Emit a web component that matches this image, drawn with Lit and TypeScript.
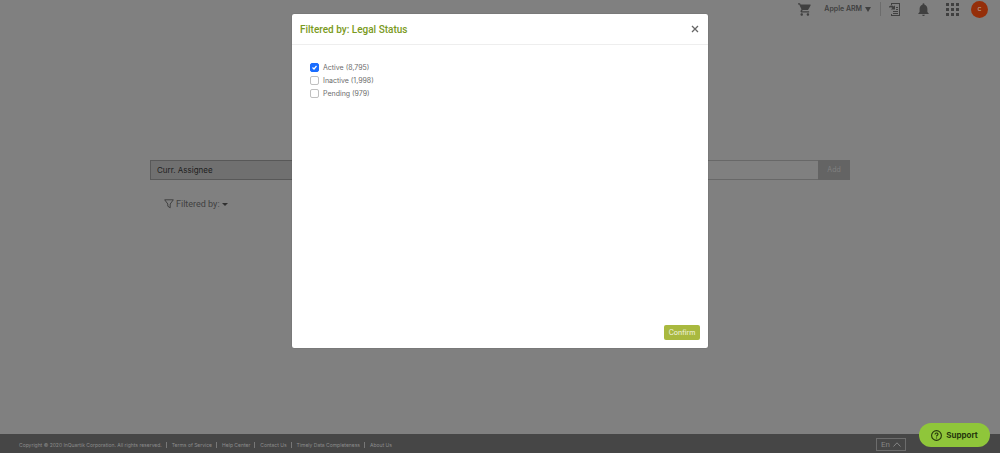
import { LitElement, html, css } from "lit";
import { customElement, state } from "lit/decorators.js";

interface StatusOption {
  id: string;
  label: string;
  checked: boolean;
}

@customElement("app-topbar")
export class AppTopbar extends LitElement {
  static styles = css`
    :host {
      display: block;
    }
    .bar {
      display: flex;
      align-items: center;
      justify-content: flex-end;
      height: 18px;
      padding: 0 12px 0 0;
    }
    button {
      display: flex;
      align-items: center;
      padding: 0;
      border: 0;
      background: none;
      color: #404040;
      font: 7px/10px Inter, sans-serif;
    }
    svg {
      display: block;
      fill: currentColor;
    }
    .cart {
      margin-right: 13px;
    }
    .account {
      gap: 3px;
      font-weight: 600;
      margin-right: 9px;
    }
    .divider {
      width: 1px;
      height: 14px;
      background: #6c6c6c;
      margin-right: 8px;
    }
    .export {
      margin-right: 17px;
    }
    .bell {
      margin-right: 17px;
    }
    .grid {
      margin-right: 12px;
    }
    .avatar {
      justify-content: center;
      width: 17px;
      height: 17px;
      border-radius: 50%;
      background: #952f0a;
      color: #b9a9a2;
      font-size: 7px;
    }
  `;

  render() {
    return html`
      <header class="bar">
        <button class="cart" aria-label="Cart">
          <svg width="13" height="13" viewBox="1 2 21 20">
            <path d="M7 18c-1.100 0-2 .9-2 2s.9 2 2 2 2-.9 2-2-.9-2-2-2zM1 2v2h2l3.600 7.600L5.250 14c-.16.300-.25.600-.25 1 0 1.100.9 2 2 2h12v-2H7.400l1.150-2h7.400c.75 0 1.400-.4 1.750-1L21.300 5.500C21.700 4.800 21.200 4 20.400 4H5.200l-.9-2H1zm16 16c-1.100 0-2 .9-2 2s.9 2 2 2 2-.9 2-2-.9-2-2-2z" />
          </svg>
        </button>
        <button class="account">
          Apple ARM
          <svg width="6" height="5" viewBox="0 0 6 5"><path d="M0 0h6L3 5z" /></svg>
        </button>
        <span class="divider"></span>
        <button class="export" aria-label="Export list">
          <svg width="12" height="13" viewBox="0 0 12 13">
            <path d="M2 0h9v13H2v-2h1v1h7V1H3v1H2z" />
            <path d="M0 3.500C1.500 2 3.500 2 4.800 3.500L6 2.300V6.500H1.800L3.400 4.900C2.500 4 1.200 4 .4 4.800zM7 4h2v1H7zM7 6h2v1H7zM4 8h5v1H4zM4 10h5v1H4z" />
          </svg>
        </button>
        <button class="bell" aria-label="Notifications">
          <svg width="11" height="13" viewBox="4 2 16 20">
            <path d="M12 22c1.100 0 2-.9 2-2h-4c0 1.100.9 2 2 2zm6-6v-5c0-3.070-1.630-5.640-4.500-6.320V4a1.500 1.500 0 0 0-3 0v.68C7.640 5.360 6 7.920 6 11v5l-2 2v1h16v-1l-2-2z" />
          </svg>
        </button>
        <button class="grid" aria-label="Apps">
          <svg width="13" height="13" viewBox="0 0 13 13">
            <path d="M0 0h3v3H0zM5 0h3v3H5zM10 0h3v3h-3zM0 5h3v3H0zM5 5h3v3H5zM10 5h3v3h-3zM0 10h3v3H0zM5 10h3v3H5zM10 10h3v3h-3z" />
          </svg>
        </button>
        <button class="avatar" aria-label="Profile">c</button>
      </header>
    `;
  }
}

@customElement("app-search")
export class AppSearch extends LitElement {
  static styles = css`
    :host {
      display: block;
      width: 70%;
      margin: 0 auto;
    }
    .row {
      display: flex;
      height: 20px;
    }
    select,
    input,
    .add {
      box-sizing: border-box;
      height: 20px;
      margin: 0;
      border-radius: 0;
      font: 8px/18px Inter, sans-serif;
    }
    select {
      appearance: none;
      width: 160px;
      padding: 0 6px;
      border: 1px solid #585858;
      background: #707070;
      color: #202020;
    }
    input {
      flex: 1;
      min-width: 0;
      border: 1px solid #686868;
      border-width: 1px 0;
      background: #808080;
    }
    .add {
      width: 32px;
      padding: 0;
      border: 0;
      background: #646464;
      color: #808080;
      font-size: 7px;
    }
    .filter {
      display: flex;
      align-items: center;
      gap: 2px;
      margin: 18px 0 0 14px;
      padding: 0;
      border: 0;
      background: none;
      color: #404040;
      font: 9px/12px Roboto, sans-serif;
    }
    .funnel {
      fill: none;
      stroke: currentColor;
    }
    .caret {
      fill: #303030;
    }
  `;

  render() {
    return html`
      <div class="row">
        <select aria-label="Search field">
          <option>Curr. Assignee</option>
        </select>
        <input type="text" aria-label="Search term" />
        <button class="add" disabled>Add</button>
      </div>
      <button class="filter">
        <svg class="funnel" width="10" height="10" viewBox="0 0 10 10">
          <path d="M.7.800h8.600L6.200 5v3.800L3.800 7.200V5z" stroke-linejoin="round" />
        </svg>
        Filtered by:
        <svg class="caret" width="6" height="3" viewBox="0 0 6 3"><path d="M0 0h6L3 3z" /></svg>
      </button>
    `;
  }
}

@customElement("app-footer")
export class AppFooter extends LitElement {
  static styles = css`
    :host {
      display: block;
    }
    .footer {
      box-sizing: border-box;
      display: flex;
      align-items: center;
      height: 19px;
      padding: 2px 94px 0 19px;
      background: #464646;
      color: #8c8c8c;
      font: 5px/6px Inter, sans-serif;
    }
    .links {
      display: flex;
      flex: 1;
    }
    a {
      margin-left: 4px;
      padding-left: 5px;
      border-left: 1px solid #777777;
      color: inherit;
      text-decoration: none;
    }
    .lang {
      display: flex;
      align-items: center;
      justify-content: center;
      gap: 3px;
      box-sizing: border-box;
      width: 30px;
      height: 13px;
      padding: 0;
      border: 1px solid #6c6c6c;
      background: none;
      color: #858585;
      font: 8px/10px Roboto, sans-serif;
    }
    .lang svg {
      fill: none;
      stroke: currentColor;
    }
  `;

  render() {
    const links = ["Terms of Service", "Help Center", "Contact Us", "Timely Data Completeness", "About Us"];
    return html`
      <footer class="footer">
        <div class="links">
          <span>Copyright © 2020 InQuartik Corporation. All rights reserved.</span>
          ${links.map((link) => html`<a href="#">${link}</a>`)}
        </div>
        <button class="lang">
          En
          <svg width="8" height="5" viewBox="0 0 8 5"><path d="M.5 4.500 4 .8l3.500 3.700" /></svg>
        </button>
      </footer>
    `;
  }
}

@customElement("filter-dialog")
export class FilterDialog extends LitElement {
  @state() private options: StatusOption[] = [
    { id: "active", label: "Active (8,795)", checked: true },
    { id: "inactive", label: "Inactive (1,998)", checked: false },
    { id: "pending", label: "Pending (979)", checked: false },
  ];

  static styles = css`
    :host {
      display: block;
      width: 416px;
    }
    .dialog {
      display: flex;
      flex-direction: column;
      min-height: 334px;
      border-radius: 2px;
      background: #ffffff;
      box-shadow: 0 0 1px #444444;
      font-family: Roboto, sans-serif;
    }
    .head {
      display: flex;
      align-items: center;
      justify-content: space-between;
      height: 30px;
      padding: 0 9px 0 8px;
      border-bottom: 1px solid #eeeeee;
    }
    h2 {
      margin: 0;
      padding-top: 2px;
      color: #7a9a22;
      font-size: 10px;
      font-weight: 500;
      line-height: 12px;
    }
    .close {
      padding: 0;
      border: 0;
      background: none;
    }
    .close svg {
      display: block;
      stroke: #666666;
      stroke-width: 1.300;
    }
    ul {
      flex: 1;
      margin: 0;
      padding: 17px 18px 0;
      list-style: none;
    }
    li {
      display: flex;
      align-items: center;
      height: 11px;
      gap: 4px;
      color: #6c6c6c;
      font: 7px/11px Inter, sans-serif;
    }
    li + li {
      margin-top: 2px;
    }
    input {
      appearance: none;
      box-sizing: border-box;
      width: 9px;
      height: 9px;
      margin: 0;
      border: 1px solid #c0c0c0;
      border-radius: 2px;
      background: #ffffff;
    }
    input:checked {
      border-color: #1a6dff;
      background: #1a6dff
        url("data:image/svg+xml,%3Csvg xmlns='http://www.w3.org/2000/svg' viewBox='0 0 7 7'%3E%3Cpath d='M1.500 3.500 3 5l2.500-3' fill='none' stroke='white' stroke-width='1.200'/%3E%3C/svg%3E")
        center / 7px 7px no-repeat;
    }
    .actions {
      display: flex;
      justify-content: flex-end;
      padding: 8px;
    }
    .confirm {
      width: 36px;
      height: 15px;
      padding: 0;
      border: 0;
      border-radius: 2px;
      background: #a9b93f;
      color: #f4f6e4;
      font: 7px/15px Inter, sans-serif;
    }
  `;

  private toggle(id: string) {
    this.options = this.options.map((o) => (o.id === id ? { ...o, checked: !o.checked } : o));
  }

  render() {
    return html`
      <section class="dialog" role="dialog" aria-modal="true" aria-labelledby="title">
        <div class="head">
          <h2 id="title">Filtered by: Legal Status</h2>
          <button class="close" aria-label="Close">
            <svg width="8" height="8" viewBox="0 0 8 8"><path d="M1 1l6 6M7 1 1 7" /></svg>
          </button>
        </div>
        <ul>
          ${this.options.map(
            (o) => html`<li>
              <input type="checkbox" id=${o.id} .checked=${o.checked} @change=${() => this.toggle(o.id)} />
              <label for=${o.id}>${o.label}</label>
            </li>`
          )}
        </ul>
        <div class="actions"><button class="confirm">Confirm</button></div>
      </section>
    `;
  }
}

@customElement("app-root")
export class AppRoot extends LitElement {
  static styles = css`
    :host {
      display: block;
    }
    .page {
      position: relative;
      display: flex;
      flex-direction: column;
      min-height: 100vh;
      background: #808080;
    }
    main {
      flex: 1;
      padding-top: 142px;
    }
    .overlay {
      position: absolute;
      inset: 0;
      display: flex;
      justify-content: center;
      align-items: flex-start;
      padding-top: 14px;
    }
    .support {
      position: absolute;
      right: 10px;
      bottom: 6px;
      display: flex;
      align-items: center;
      justify-content: center;
      gap: 4px;
      width: 71px;
      height: 24px;
      padding: 0;
      border: 0;
      border-radius: 12px;
      background: #8fc63a;
      color: #26380c;
      font: 700 8px/12px Inter, sans-serif;
    }
  `;

  render() {
    return html`
      <div class="page">
        <app-topbar></app-topbar>
        <main><app-search></app-search></main>
        <app-footer></app-footer>
        <div class="overlay"><filter-dialog></filter-dialog></div>
        <button class="support">
          <svg width="11" height="11" viewBox="0 0 11 11" fill="none" stroke="currentColor">
            <circle cx="5.500" cy="5.500" r="4.900" stroke-width="1.100" />
            <path d="M4 4.500C4 2.500 7 2.500 7 4.300 7 5.300 5.500 5.300 5.500 6.500M5.500 7.400v1.100" stroke-width="1.100" />
          </svg>
          Support
        </button>
      </div>
    `;
  }
}
